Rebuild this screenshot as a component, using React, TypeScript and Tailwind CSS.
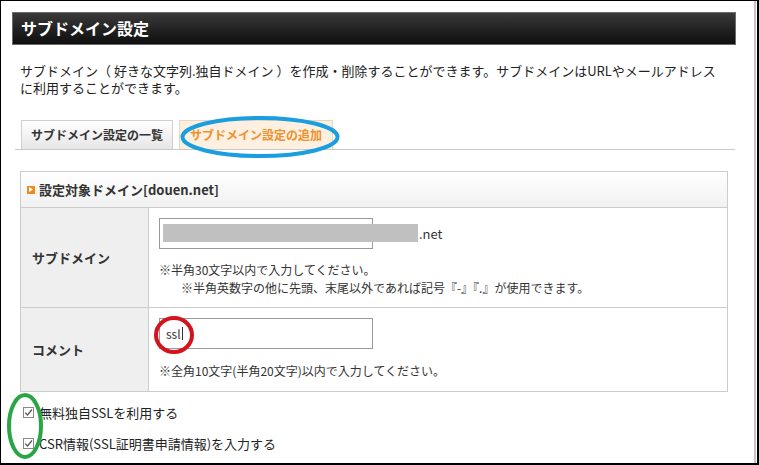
import React from "react";

const font = {
  fontFamily: '"Noto Sans CJK JP", "Liberation Sans", sans-serif',
};

function CheckIcon() {
  return (
    <span className="inline-flex w-[11px] h-[11px] border border-[#8a8a8a] bg-white items-center justify-center">
      <svg width="9" height="9" viewBox="0 0 9 9">
        <path d="M1.2 4.6 L3.5 7 L8 1.5" fill="none" stroke="#555" strokeWidth="1.2" />
      </svg>
    </span>
  );
}

export default function App() {
  return (
    <div
      className="relative w-[759px] h-[465px] bg-white border-t border-l border-r-2 border-b-2 border-black overflow-hidden text-[#222]"
      style={font}
    >
      <div className="w-[755px] h-full border-r-2 border-[#c6c6c6] pl-[11px] pt-[11px]">
        {/* Title bar */}
        <div className="w-[724px] h-[33px] border border-[#6b6b6b] bg-linear-to-b from-[#3a3a3a] to-[#0f0f0f] px-[8px] text-[16px] font-bold leading-[31px] text-white">
          サブドメイン設定
        </div>

        <div className="mt-[17px] pl-[8px] text-[13px] leading-[17px]">
          <div>
            サブドメイン（ 好きな文字列.独自ドメイン ）を作成・削除することができます。サブドメインはURLやメールアドレス
          </div>
          <div>に利用することができます。</div>
        </div>

        {/* Tabs */}
        <div className="mt-[24px] ml-[3px] w-[720px] flex gap-[6px] pl-[6px] border-b border-[#c9c9c9]">
          <div className="w-[152px] h-[29px] border border-b-0 border-[#cfcfcf] bg-linear-to-b from-white to-[#e6e6e6] flex items-center justify-center text-[12px] font-bold text-[#333]">
            サブドメイン設定の一覧
          </div>
          <div className="w-[154px] h-[29px] border border-b-0 border-[#e8d6c0] bg-[#fdf0e0] flex items-center justify-center text-[12px] font-bold text-[#f0902c]">
            サブドメイン設定の追加
          </div>
        </div>

        {/* Form box */}
        <div className="mt-[21px] ml-[8px] w-[708px] border border-[#cccccc]">
          <div className="h-[36px] border-b border-[#cccccc] bg-linear-to-b from-white to-[#f1f1f1] flex items-center gap-[4px] pl-[6px] text-[13px] font-bold text-[#333]">
            <span className="w-[8px] h-[8px] bg-[#f08a1c] flex items-center justify-center">
              <svg width="4" height="5" viewBox="0 0 4 5">
                <path d="M0 0 L4 2.5 L0 5 Z" fill="#fff" />
              </svg>
            </span>
            設定対象ドメイン[douen.net]
          </div>

          <div className="flex border-b border-[#cccccc]">
            <div className="w-[128px] shrink-0 bg-[#efefef] border-r border-[#cccccc] flex items-center pl-[11px] text-[13px] font-bold text-[#333]">
              サブドメイン
            </div>
            <div className="flex-1 pl-[10px] pt-[10px] pb-[10px]">
              <div className="flex items-center">
                <div className="relative w-[214px] h-[31px] border border-[#9a9a9a] bg-white">
                  <div className="absolute left-[3px] top-[5px] w-[255px] h-[18px] bg-[#c0c0c0]" />
                </div>
                <span className="ml-[46px] text-[13px] text-[#333]">.net</span>
              </div>
              <div className="mt-[12px] text-[12px] leading-[18px] text-[#333]">
                <div>※半角30文字以内で入力してください。</div>
                <div className="pl-[22px]">
                  ※半角英数字の他に先頭、末尾以外であれば記号『-』『.』が使用できます。
                </div>
              </div>
            </div>
          </div>

          <div className="flex">
            <div className="w-[128px] shrink-0 bg-[#efefef] border-r border-[#cccccc] flex items-center pl-[11px] text-[13px] font-bold text-[#333]">
              コメント
            </div>
            <div className="flex-1 pl-[10px] pt-[10px] pb-[11px]">
              <div className="w-[214px] h-[31px] border border-[#9a9a9a] bg-white flex items-center pl-[6px] text-[12px] text-[#333]">
                ssl
                <span className="ml-[1px] w-px h-[13px] bg-[#333]" />
              </div>
              <div className="mt-[13px] text-[12px] leading-[18px] text-[#333]">
                ※全角10文字(半角20文字)以内で入力してください。
              </div>
            </div>
          </div>
        </div>

        {/* Checkboxes */}
        <div className="mt-[5px] pl-[11px] text-[13px] text-[#222]">
          <label className="h-[31px] flex items-center gap-[5px]">
            <CheckIcon />
            無料独自SSLを利用する
          </label>
          <label className="h-[31px] flex items-center gap-[5px]">
            <CheckIcon />
            CSR情報(SSL証明書申請情報)を入力する
          </label>
        </div>
      </div>

      {/* Annotation marks */}
      <svg className="absolute left-[179px] top-[115px]" width="160" height="42">
        <ellipse cx="80" cy="21" rx="77.5" ry="19" fill="none" stroke="#1b9ee0" strokeWidth="4" />
      </svg>
      <svg className="absolute left-[153px] top-[315px]" width="40" height="38">
        <ellipse cx="20" cy="19" rx="18" ry="17" fill="none" stroke="#d5121e" strokeWidth="4" />
      </svg>
      <svg className="absolute left-[6px] top-[392px]" width="36" height="66">
        <ellipse cx="18" cy="33" rx="16" ry="31" fill="none" stroke="#2aa445" strokeWidth="4" />
      </svg>
    </div>
  );
}
